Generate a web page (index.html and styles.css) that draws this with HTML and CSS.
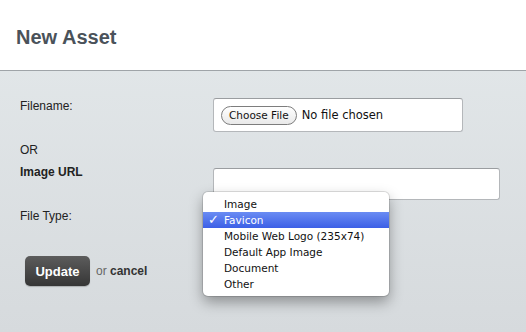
FILE: index.html
```html
<!DOCTYPE html>
<html lang="en">
<head>
  <meta charset="UTF-8" />
  <title>New Asset</title>
  <link rel="stylesheet" href="styles.css">
</head>
<body>
  <div class="header">
    <h1>New Asset</h1>
  </div>

  <form class="asset-form">
    <div class="row row-file">
      <label>Filename:</label>
      <div class="file-box">
        <span class="file-btn">Choose File</span>
        <span class="file-name">No file chosen</span>
      </div>
    </div>

    <div class="or">OR</div>

    <div class="row row-url">
      <label class="strong">Image URL</label>
      <input type="text" class="url-input" />
    </div>

    <div class="row row-type">
      <label>File Type:</label>
      <select class="type-select">
        <option>Favicon</option>
      </select>
    </div>

    <div class="actions">
      <button type="button" class="update-btn">Update</button>
      <span class="or-cancel">or <a href="#">cancel</a></span>
    </div>
  </form>

  <!-- open select popup -->
  <ul class="menu">
    <li>Image</li>
    <li class="selected"><span class="check">✓</span>Favicon</li>
    <li>Mobile Web Logo (235x74)</li>
    <li>Default App Image</li>
    <li>Document</li>
    <li>Other</li>
  </ul>
</body>
</html>
```

FILE: styles.css
```css
* {
  margin: 0;
  padding: 0;
  box-sizing: border-box;
}

body {
  font-family: 'Liberation Sans', Arial, sans-serif;
  font-size: 12px;
  color: #222;
  background: linear-gradient(#e4e9eb 0%, #d6dadd 100%);
  min-height: 100vh;
  position: relative;
}

.header {
  background: #fff;
  height: 71px;
  border-bottom: 1px solid #9fa4a8;
  padding: 25px 16px 0;
}

h1 {
  font-size: 20px;
  font-weight: 700;
  color: #4a525a;
  line-height: 24px;
}

.asset-form {
  padding: 27px 0 0 20px;
}

.row {
  display: grid;
  grid-template-columns: 193px 1fr;
  align-items: start;
}

label {
  display: block;
  line-height: 15px;
  color: #222;
}

label.strong {
  font-weight: 700;
}

.row-file label {
  padding-top: 1px;
}

.file-box {
  width: 250px;
  height: 34px;
  background: #fff;
  border: 1px solid #b4b7ba;
  border-top-color: #9a9da0;
  border-radius: 3px;
  display: flex;
  align-items: center;
  padding-left: 7px;
  font-family: 'DejaVu Sans', sans-serif;
}

.file-btn {
  display: inline-block;
  height: 19px;
  line-height: 17px;
  padding: 0 7px;
  border: 1px solid #7d7d7d;
  border-radius: 10px;
  background: linear-gradient(#ffffff, #e9e9e9);
  font-size: 10.5px;
  color: #111;
}

.file-name {
  margin-left: 5px;
  font-size: 11.5px;
  color: #111;
}

.or {
  line-height: 15px;
  margin-top: 11px;
}

.row-url {
  margin-top: 7px;
}

.url-input {
  width: 287px;
  height: 32px;
  margin-top: 3px;
  border: 1px solid #b4b7ba;
  border-top-color: #9a9da0;
  border-radius: 3px;
  background: #fff;
}

.row-type {
  margin-top: 9px;
}

.type-select {
  width: 160px;
  margin-top: -2px;
}

.actions {
  display: flex;
  align-items: center;
  margin-top: 30px;
  padding-left: 5px;
}

.update-btn {
  width: 65px;
  height: 30px;
  border: none;
  border-radius: 5px;
  background: linear-gradient(#5c5c5c 0%, #363636 100%);
  box-shadow: 0 1px 1px rgba(0, 0, 0, 0.2);
  color: #fff;
  font-family: 'Liberation Sans', Arial, sans-serif;
  font-size: 13px;
  font-weight: 700;
}

.or-cancel {
  margin-left: 6px;
  font-size: 12px;
  color: #666;
}

.or-cancel a {
  color: #333;
  font-weight: 700;
  text-decoration: none;
}

.menu {
  position: absolute;
  left: 203px;
  top: 192px;
  width: 186px;
  padding: 4px 0;
  list-style: none;
  background: #fff;
  border-radius: 5px;
  box-shadow: 0 0 0 1px rgba(0, 0, 0, 0.12), 0 6px 14px rgba(0, 0, 0, 0.35);
  font-family: 'DejaVu Sans', sans-serif;
  font-size: 10.5px;
  color: #111;
}

.menu li {
  position: relative;
  height: 16px;
  line-height: 16px;
  padding-left: 21px;
}

.menu li.selected {
  background: linear-gradient(#6a8cf3 0%, #3c5fe6 100%);
  color: #fff;
}

.check {
  position: absolute;
  left: 5px;
  top: 0;
  font-size: 13px;
}
```
